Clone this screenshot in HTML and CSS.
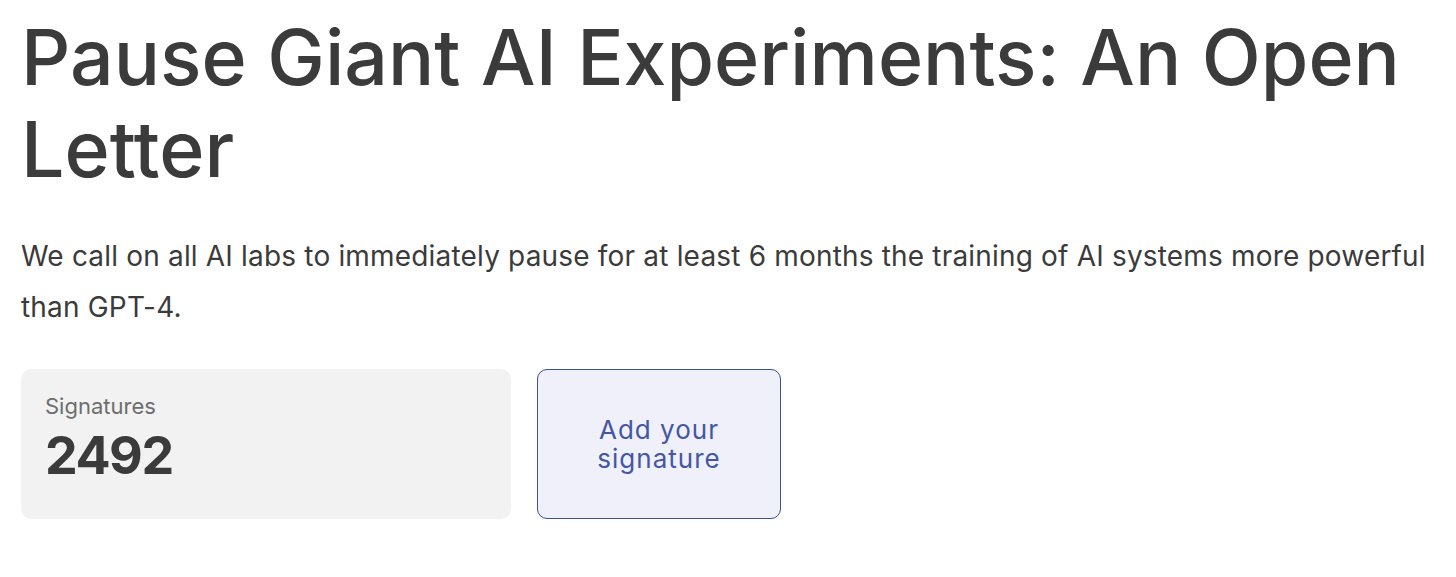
FILE: index.html
```html
<!DOCTYPE HTML>
<html>
<head>
  <title>Pause Giant AI Experiments: An Open Letter</title>
  <meta name="viewport" content="width=device-width, initial-scale=1">
  <link rel="stylesheet" href="styles.css">
</head>
<body>
  <main class="letter">
    <h1 class="letter-title">Pause Giant AI Experiments: An Open Letter</h1>
    <p class="letter-lead">We call on all AI labs to immediately pause for at least 6 months the training of AI systems more powerful than GPT-4.</p>
    <div class="sign-row">
      <div class="count-card">
        <div class="count-label">Signatures</div>
        <div class="count-value">2492</div>
      </div>
      <a class="sign-btn" href="#sign">Add your<br>signature</a>
    </div>
  </main>
</body>
</html>
```

FILE: styles.css
```css
body {
  font-family: Inter, "Noto Sans", sans-serif;
  background-color: #fff;
  color: #3b3b3b;
  margin: 0;
  padding: 0 10px 0 21px;
}

.letter-title {
  font-size: 77px;
  font-weight: 500;
  line-height: 92px;
  margin: 11px 0 0;
}

.letter-lead {
  font-size: 28px;
  line-height: 51px;
  letter-spacing: 0.18px;
  margin: 36px 0 0;
}

.sign-row {
  display: flex;
  gap: 26px;
  margin-top: 36px;
}

.count-card {
  width: 490px;
  height: 150px;
  box-sizing: border-box;
  background-color: #f2f2f2;
  border-radius: 10px;
  padding: 24px 24px;
}

.count-label {
  font-size: 22px;
  color: #6e6e6e;
  line-height: 26px;
}

.count-value {
  font-size: 52px;
  font-weight: 700;
  line-height: 60px;
  letter-spacing: -1.5px;
  margin-top: 7px;
}

.sign-btn {
  width: 244px;
  height: 150px;
  box-sizing: border-box;
  display: flex;
  align-items: center;
  justify-content: center;
  text-align: center;
  background-color: #eff0f9;
  border: 1.5px solid #3d4f9a;
  border-radius: 10px;
  color: #4457a3;
  font-size: 26px;
  line-height: 29px;
  letter-spacing: 1px;
  text-decoration: none;
}
```
